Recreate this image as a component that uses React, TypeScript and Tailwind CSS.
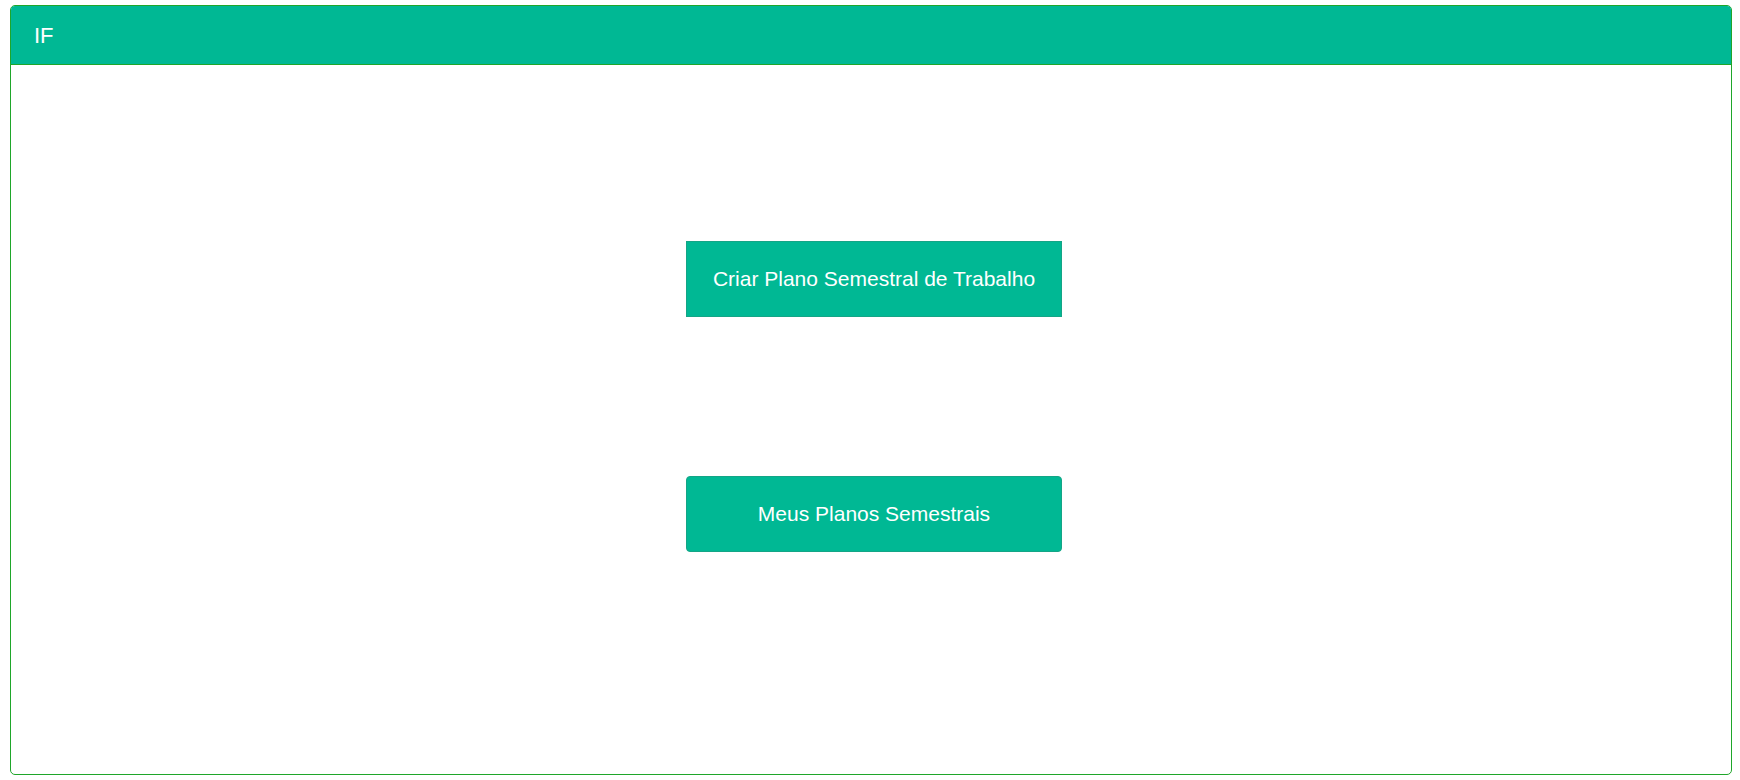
export default function App() {
  return (
    <div className="h-[780px] w-[1740px] bg-white p-[5px_8px_5px_10px] font-['Liberation_Sans',Arial,sans-serif]">
      <div className="flex h-[770px] flex-col overflow-hidden rounded-[5px] border border-[#1fa62a]">
        <div className="flex h-[59px] shrink-0 items-center border-b border-[#1fa62a] bg-[#00b894] px-[23px]">
          <span className="text-[22px] text-white">IF</span>
        </div>
        <div className="flex flex-1 flex-col items-center pl-[6px] pt-[176px]">
          <button className="h-[76px] w-[376px] border border-[#14a586] bg-[#00b894] text-[21px] text-white">
            Criar Plano Semestral de Trabalho
          </button>
          <button className="mt-[159px] h-[76px] w-[376px] rounded-[4px] border border-[#14a586] bg-[#00b894] text-[21px] text-white">
            Meus Planos Semestrais
          </button>
        </div>
      </div>
    </div>
  );
}
